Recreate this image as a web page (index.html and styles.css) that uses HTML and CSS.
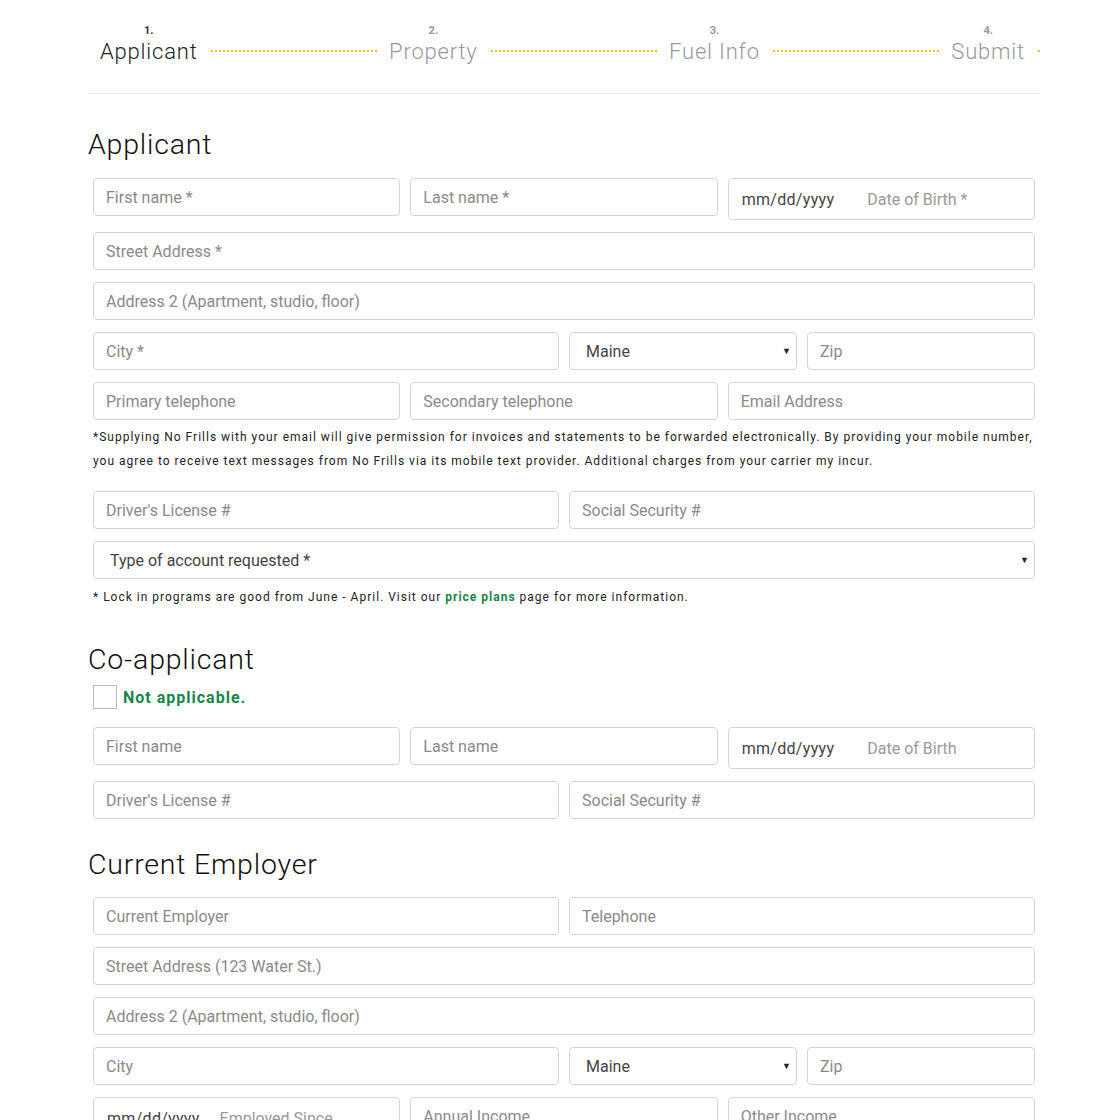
FILE: index.html
```html
<!DOCTYPE html>
<html>
<head>
<meta charset="utf-8">
<link rel="stylesheet" href="styles.css">
</head>
<body>
<div class="page">
  <nav class="stepper">
    <div class="step active"><span class="num">1.</span><span class="label">Applicant</span></div>
    <div class="dots"></div>
    <div class="step"><span class="num">2.</span><span class="label">Property</span></div>
    <div class="dots"></div>
    <div class="step"><span class="num">3.</span><span class="label">Fuel Info</span></div>
    <div class="dots"></div>
    <div class="step"><span class="num">4.</span><span class="label">Submit</span></div>
    <div class="dots stub"></div>
  </nav>
  <hr class="rule">

  <section class="section">
    <h2 class="heading">Applicant</h2>
    <div class="row">
      <div class="col c4"><div class="field">First name *</div></div>
      <div class="col c4"><div class="field">Last name *</div></div>
      <div class="col c4"><div class="field date"><span class="dval">mm/dd/yyyy</span><span class="dlabel">Date of Birth *</span></div></div>
    </div>
    <div class="row">
      <div class="col c12"><div class="field">Street Address *</div></div>
    </div>
    <div class="row">
      <div class="col c12"><div class="field">Address 2 (Apartment, studio, floor)</div></div>
    </div>
    <div class="row">
      <div class="col c6"><div class="field">City *</div></div>
      <div class="col c3"><div class="field select">Maine<span class="caret">▼</span></div></div>
      <div class="col c3"><div class="field">Zip</div></div>
    </div>
    <div class="row">
      <div class="col c4"><div class="field">Primary telephone</div></div>
      <div class="col c4"><div class="field">Secondary telephone</div></div>
      <div class="col c4"><div class="field">Email Address</div></div>
    </div>
    <p class="note">*Supplying No Frills with your email will give permission for invoices and statements to be forwarded electronically. By providing your mobile number, you agree to receive text messages from No Frills via its mobile text provider. Additional charges from your carrier my incur.</p>
    <div class="row">
      <div class="col c6"><div class="field">Driver's License #</div></div>
      <div class="col c6"><div class="field">Social Security #</div></div>
    </div>
    <div class="row tight">
      <div class="col c12"><div class="field select wide">Type of account requested *<span class="caret">▼</span></div></div>
    </div>
    <p class="note lock">* Lock in programs are good from June - April. Visit our <a class="link" href="#">price plans</a> page for more information.</p>
  </section>

  <section class="section">
    <h2 class="heading co">Co-applicant</h2>
    <label class="check"><span class="box"></span><span class="check-text">Not applicable.</span></label>
    <div class="row">
      <div class="col c4"><div class="field">First name</div></div>
      <div class="col c4"><div class="field">Last name</div></div>
      <div class="col c4"><div class="field date"><span class="dval">mm/dd/yyyy</span><span class="dlabel">Date of Birth</span></div></div>
    </div>
    <div class="row">
      <div class="col c6"><div class="field">Driver's License #</div></div>
      <div class="col c6"><div class="field">Social Security #</div></div>
    </div>
  </section>

  <section class="section">
    <h2 class="heading emp">Current Employer</h2>
    <div class="row">
      <div class="col c6"><div class="field">Current Employer</div></div>
      <div class="col c6"><div class="field">Telephone</div></div>
    </div>
    <div class="row">
      <div class="col c12"><div class="field">Street Address (123 Water St.)</div></div>
    </div>
    <div class="row">
      <div class="col c12"><div class="field">Address 2 (Apartment, studio, floor)</div></div>
    </div>
    <div class="row">
      <div class="col c6"><div class="field">City</div></div>
      <div class="col c3"><div class="field select">Maine<span class="caret">▼</span></div></div>
      <div class="col c3"><div class="field">Zip</div></div>
    </div>
    <div class="row">
      <div class="col c4"><div class="field date"><span class="dval">mm/dd/yyyy</span><span class="dlabel short">Employed Since</span></div></div>
      <div class="col c4"><div class="field">Annual Income</div></div>
      <div class="col c4"><div class="field">Other Income</div></div>
    </div>
  </section>
</div>
</body>
</html>
```

FILE: styles.css
```css
* { box-sizing: border-box; }
html, body { margin: 0; padding: 0; background: #fff; }
body { font-family: Roboto, "Noto Sans", Arial, sans-serif; color: #333; }

.page { width: 952px; margin-left: 88px; }

/* stepper */
.stepper { display: flex; align-items: flex-end; padding-top: 22px; height: 66px; overflow: hidden; }
.step { display: flex; flex-direction: column; align-items: center; padding: 0 13px 0 12px; }
.step .num { font-size: 11px; font-weight: 700; color: #999; line-height: 14px; }
.step .label { font-size: 22px; font-weight: 300; color: #999; letter-spacing: 0.8px; line-height: 28px; white-space: nowrap; }
.step.active .num { color: #333; }
.step.active .label { color: #222; }
.dots { flex: 1; border-top: 2px dotted #f4c20d; margin-bottom: 14px; }
.dots.stub { flex: 0 0 2px; }

.rule { border: 0; border-top: 1px solid #ececec; margin: 27px 0 0; }

/* headings */
.heading { font-size: 28.5px; font-weight: 300; letter-spacing: 0.8px; color: #111; margin: 34px 0 16px; line-height: 34px; }
.heading.co { margin: 36px 0 8px; }
.heading.emp { margin: 29px 0 15px; }

/* rows & fields */
.row { display: flex; margin-bottom: 12px; align-items: flex-start; }
.row.tight { margin-bottom: 8px; }
.col { padding: 0 5px; }
.c12 { flex: 0 0 100%; }
.c6 { flex: 0 0 50%; }
.c4 { flex: 0 0 33.3333%; }
.c3 { flex: 0 0 25%; }

.field {
  height: 38px;
  border: 1px solid #d4d4d4;
  border-radius: 4px;
  padding: 0 12px;
  display: flex;
  align-items: center;
  font-size: 16px;
  color: #8a8a8a;
  white-space: nowrap;
  overflow: hidden;
  background: #fff;
}
.field.select { color: #444; padding-left: 16px; position: relative; }
.field.select.wide { padding-left: 16px; }
.caret { position: absolute; right: 5px; top: 50%; transform: translateY(-50%); font-size: 9px; color: #222; }
.field.date { height: 42px; padding-left: 13px; }
.dval { color: #444; letter-spacing: 0.3px; }
.dlabel { color: #999; margin-left: 33px; }
.dlabel.short { margin-left: 20px; }

/* notes */
.note { font-size: 12px; letter-spacing: 1px; line-height: 24px; color: #222; margin: -7px 0 18px 5px; }
.note.lock { margin: 0 0 0 5px; line-height: 20px; }
.link { color: #17864a; font-weight: 700; text-decoration: none; }

/* checkbox */
.check { display: flex; align-items: center; margin: 0 0 18px 5px; }
.box { width: 24px; height: 24px; border: 1px solid #bbb; background: #fff; }
.check-text { color: #17864a; font-weight: 700; font-size: 16px; letter-spacing: 1px; margin-left: 6px; }
```
